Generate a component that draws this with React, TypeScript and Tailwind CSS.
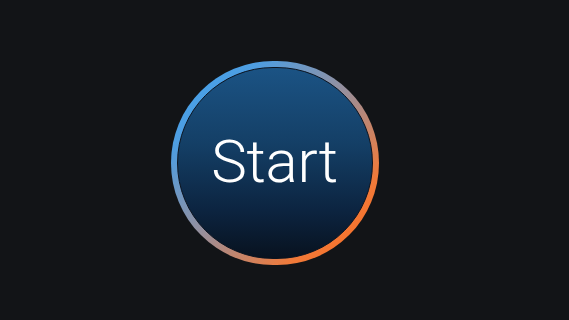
import React from "react";

export default function App() {
  return (
    <div className="w-[569px] h-[320px] bg-[#121417] flex items-center justify-center">
      <button className="w-[208px] h-[204px] mr-[20px] mt-[6px] rounded-full p-[6px] bg-[linear-gradient(135deg,#3ea6f4_0%,#4f9de0_22%,#9a8f9a_50%,#f07a3a_78%,#ff6a1a_100%)]">
        <div className="w-full h-full rounded-full border border-[#0c1420] bg-[linear-gradient(180deg,#1b5384_0%,#143f66_40%,#0c2440_75%,#08121f_100%)] flex items-center justify-center">
          <span className="text-white font-light text-[60px] leading-none tracking-[-0.3px] [font-family:Roboto,'Liberation_Sans',sans-serif] mb-[2px]">
            Start
          </span>
        </div>
      </button>
    </div>
  );
}
